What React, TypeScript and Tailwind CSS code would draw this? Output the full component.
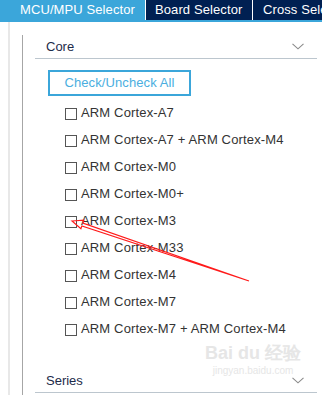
const cores = [
  "ARM Cortex-A7",
  "ARM Cortex-A7 + ARM Cortex-M4",
  "ARM Cortex-M0",
  "ARM Cortex-M0+",
  "ARM Cortex-M3",
  "ARM Cortex-M33",
  "ARM Cortex-M4",
  "ARM Cortex-M7",
  "ARM Cortex-M7 + ARM Cortex-M4",
];

const Chevron = () => (
  <svg width="12" height="7" viewBox="0 0 12 7" className="shrink-0">
    <path d="M0.5 0.8 L6 5.8 L11.5 0.8" fill="none" stroke="#8a8a8a" strokeWidth="1.1" />
  </svg>
);

const SectionHeader = ({ title }: { title: string }) => (
  <div className="flex h-[24px] items-center justify-between border-b border-[#bcc6ce] pl-[11px] pr-[13px] text-[13px] text-[#1d2b4a]">
    <span>{title}</span>
    <Chevron />
  </div>
);

const Arrow = () => (
  <svg className="pointer-events-none absolute left-0 top-0" width="322" height="395">
    <polygon
      points="72,221 83.8,220.2 82.9,223.1 249,281 81.9,225.9 80.9,228.8"
      fill="none"
      stroke="#ff1a1a"
      strokeWidth="1.2"
      strokeLinejoin="miter"
    />
  </svg>
);

export default function App() {
  return (
    <div className="relative h-[395px] w-[322px] overflow-hidden bg-white font-['Liberation_Sans',Arial,sans-serif]">
      <div className="flex h-[22px] border-b-2 border-[#3ba6da] text-[13px] tracking-[0.1px] text-white whitespace-nowrap">
        <div className="flex w-[145px] shrink-0 items-center bg-[#3ba6da] pl-[20px]">MCU/MPU Selector</div>
        <div className="w-[1px] shrink-0 bg-white" />
        <div className="flex w-[106px] shrink-0 items-center bg-[#002052] pl-[9px]">Board Selector</div>
        <div className="w-[1px] shrink-0 bg-white" />
        <div className="flex min-w-0 flex-1 items-center overflow-hidden bg-[#002052] pl-[10px]">Cross Selector</div>
      </div>

      <div className="ml-[8px] h-[373px] border-l-2 border-[#e8e8e8] pl-[12px] pt-[13px]">
        <div className="h-full border-l border-[#a6a6a6] pl-[12px] pr-[5px]">
          <SectionHeader title="Core" />
          <div className="mt-[11px] ml-[13px] flex h-[26px] w-[143px] items-center justify-center border-2 border-[#3ba6da] text-[13px] tracking-[0.1px] text-[#4aaee0]">
            Check/Uncheck All
          </div>
          <div className="mt-[3px] flex flex-col">
            {cores.map((c) => (
              <div key={c} className="flex h-[27px] items-center pl-[30px] text-[13px] tracking-[0.15px] text-[#333333]">
                <span className="mt-[2px] mr-[4px] h-[12px] w-[12px] shrink-0 border border-[#555555] bg-white" />
                <span>{c}</span>
              </div>
            ))}
          </div>
          <div className="mt-[27px]">
            <SectionHeader title="Series" />
          </div>
        </div>
      </div>

      <div className="pointer-events-none absolute left-[205px] top-[344px] flex flex-col items-center leading-none text-[#e6e6e6]">
        <span className="text-[18px] font-bold">Bai du 经验</span>
        <span className="mt-[4px] text-[10px]">jingyan.baidu.com</span>
      </div>

      <Arrow />
    </div>
  );
}
